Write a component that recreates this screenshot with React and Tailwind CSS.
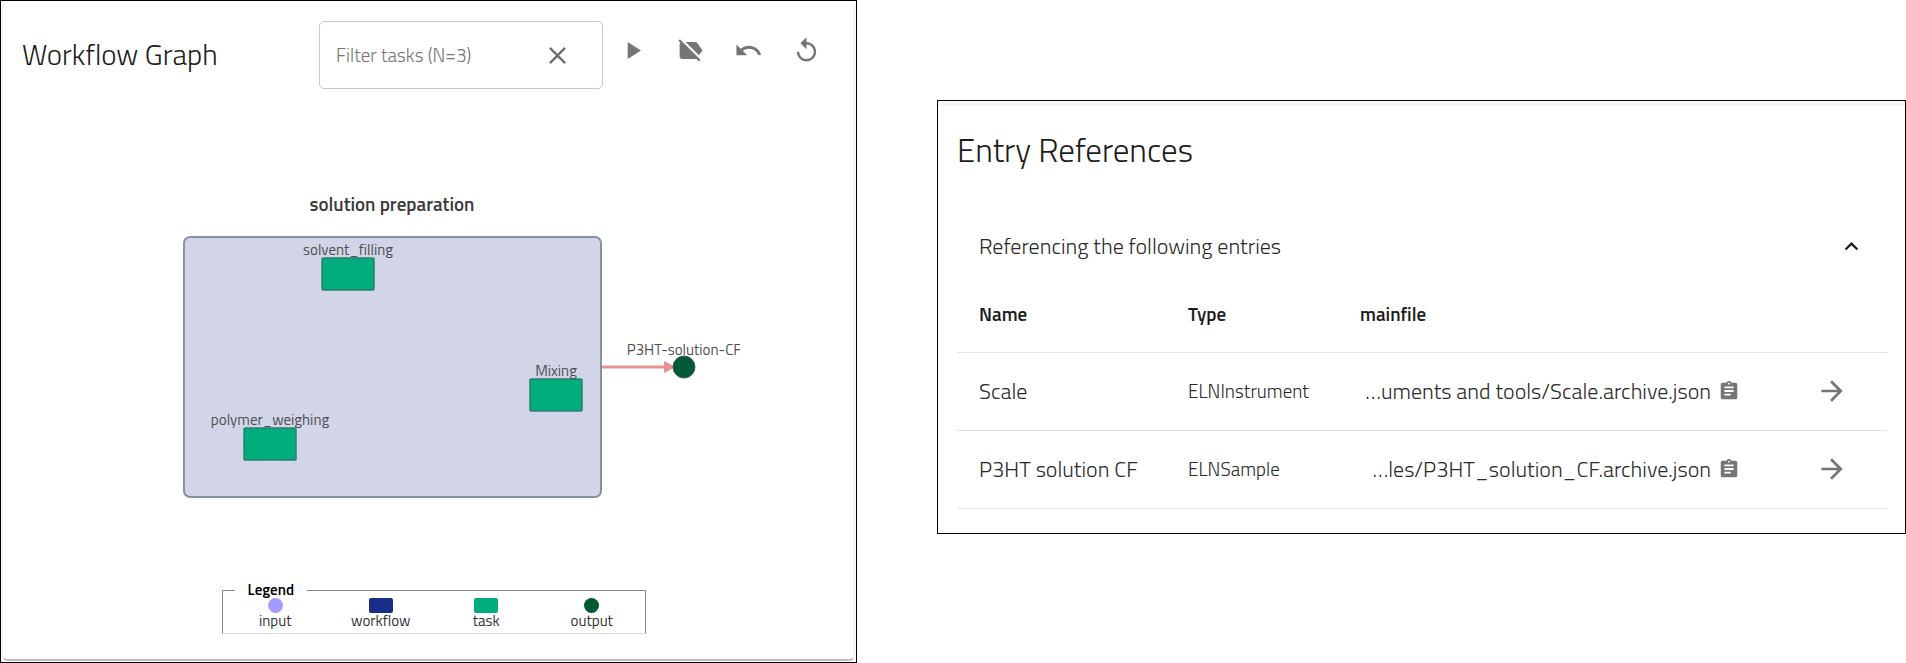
import React from "react";
import {
  MdArrowForward,
  MdAssignment,
  MdClose,
  MdExpandLess,
  MdLabelOff,
  MdPlayArrow,
  MdReplay,
  MdUndo,
} from "react-icons/md";

const actions = [
  { label: "Play", Icon: MdPlayArrow },
  { label: "Hide labels", Icon: MdLabelOff },
  { label: "Undo", Icon: MdUndo },
  { label: "Reset", Icon: MdReplay },
];

const tasks = [
  { name: "solvent_filling", x: 348, y: 275 },
  { name: "Mixing", x: 556, y: 396 },
  { name: "polymer_weighing", x: 270, y: 445 },
];

const legend = [
  { name: "input", shape: "size-[15px] rounded-full bg-[#a49dff]" },
  { name: "workflow", shape: "h-[15px] w-6 rounded-xs bg-[#192e86]" },
  { name: "task", shape: "h-[15px] w-6 rounded-xs bg-[#00ad7c]" },
  { name: "output", shape: "size-[15px] rounded-full bg-[#005a35]" },
];

const entries = [
  { name: "Scale", type: "ELNInstrument", file: "…uments and tools/Scale.archive.json" },
  { name: "P3HT solution CF", type: "ELNSample", file: "…les/P3HT_solution_CF.archive.json" },
];

function Graph() {
  return (
    <svg viewBox="100 180 640 340" className="mx-auto block w-[640px] max-w-full" role="img" aria-label="Workflow graph">
      <text x="392" y="212" textAnchor="middle" className="fill-[#3c3c3c] text-[19px] font-semibold">
        solution preparation
      </text>
      <rect x="184" y="238" width="417" height="260" rx="6" fill="#d2d5e8" stroke="#8791a0" strokeWidth="2" />
      <path d="M602 368H666" stroke="#e69393" strokeWidth="3" />
      <path d="M664 362L676 368L664 374Z" fill="#e69393" />
      <circle cx="684" cy="368" r="11" fill="#005a35" stroke="#3d5f5a" />
      <text x="684" y="356" textAnchor="middle" className="fill-[#505050] text-[15px]">
        P3HT-solution-CF
      </text>
      {tasks.map((t) => (
        <g key={t.name}>
          <rect x={t.x - 26} y={t.y - 16} width="52" height="32" rx="1" fill="#00ad7c" stroke="#2f7d72" strokeWidth="1.5" />
          <text x={t.x} y={t.y - 19} textAnchor="middle" className="fill-[#505050] text-[15px]">
            {t.name}
          </text>
        </g>
      ))}
    </svg>
  );
}

function WorkflowPanel() {
  return (
    <section className="w-full border border-black p-px">
      <div className="h-full rounded-md border-x border-b-2 border-x-[#ececec] border-b-[#bdbdbd] pt-[19px]">
        <header className="flex items-start pr-[19px] pl-[19px]">
          <h1 className="mt-[13px] flex-1 text-[29px] leading-10 font-light whitespace-nowrap text-[#1c1c1c]">
            Workflow Graph
          </h1>
          <div className="flex h-[68px] w-[284px] items-center rounded-[5px] border border-[#c9c9c9] px-4">
            <input
              aria-label="Filter tasks"
              placeholder="Filter tasks (N=3)"
              className="min-w-0 flex-1 bg-transparent text-[19px] font-light outline-none placeholder:text-[#757575]"
            />
            <button aria-label="Clear filter" className="flex size-[58px] items-center justify-center text-[#6f6f6f]">
              <MdClose size={29} />
            </button>
          </div>
          {actions.map(({ label, Icon }) => (
            <button key={label} aria-label={label} className="flex size-[58px] items-center justify-center text-[#757575]">
              <Icon size={29} />
            </button>
          ))}
        </header>
        <div className="mt-[90px] pr-[18px]">
          <Graph />
        </div>
        <div className="pt-[63px] pl-[10px]">
          <fieldset className="mx-auto flex h-[52px] w-[424px] max-w-full border border-[#858585] border-b-[#dcdcdc]">
            <legend className="ml-3 px-[13px] text-[15px] leading-4 font-semibold text-black">Legend</legend>
            <ul className="flex w-full">
              {legend.map((item) => (
                <li key={item.name} className="flex flex-1 flex-col items-center text-[15px] leading-4 text-[#333]">
                  <span className={item.shape} />
                  {item.name}
                </li>
              ))}
            </ul>
          </fieldset>
        </div>
      </div>
    </section>
  );
}

function ReferencesPanel() {
  return (
    <section className="w-full border border-black pb-[24px] text-[#2a2a2a]">
      <div className="h-[5px] bg-[#f5f5f5]" />
      <div className="pr-[18px] pl-[19px]">
        <h2 className="pt-[24px] text-[33px] leading-[40px] font-light text-[#1c1c1c]">Entry References</h2>
        <button aria-expanded="true" className="mt-[60px] flex w-full items-center justify-between pr-[22px] pl-[22px] text-[22px] leading-8 font-light">
          Referencing the following entries
          <MdExpandLess size={27} className="text-[#1c1c1c]" />
        </button>
        <table className="mt-[14px] w-full table-fixed text-left">
          <colgroup>
            <col className="w-[209px]" />
            <col className="w-[172px]" />
            <col />
            <col className="w-[126px]" />
          </colgroup>
          <thead>
            <tr className="h-[76px] border-b border-[#e3e3e3] text-[19px] text-[#1c1c1c]">
              <th className="pl-[22px] font-semibold">Name</th>
              <th className="pl-[22px] font-semibold">Type</th>
              <th className="pl-[22px] font-semibold">mainfile</th>
              <th aria-label="Open" />
            </tr>
          </thead>
          <tbody>
            {entries.map((e) => (
              <tr key={e.name} className="h-[78px] border-b border-[#e3e3e3] text-[22px] font-light whitespace-nowrap">
                <td className="pl-[22px]">{e.name}</td>
                <td className="pl-[22px] text-[19px]">{e.type}</td>
                <td className="pr-[21px]">
                  <div className="flex items-center justify-end gap-[7px]">
                    {e.file}
                    <button aria-label="Copy path" className="text-[#757575]">
                      <MdAssignment size={22} />
                    </button>
                  </div>
                </td>
                <td className="pr-[39px]">
                  <button aria-label={`Open ${e.name}`} className="ml-auto block text-[#757575]">
                    <MdArrowForward size={32} />
                  </button>
                </td>
              </tr>
            ))}
          </tbody>
        </table>
      </div>
    </section>
  );
}

export default function App() {
  return (
    <main className="flex min-h-screen gap-20 bg-white font-['Titillium_Web',Roboto,sans-serif]">
      <div className="flex min-w-0 flex-[857]">
        <WorkflowPanel />
      </div>
      <div className="flex min-w-0 flex-[969] items-start pt-[100px]">
        <ReferencesPanel />
      </div>
    </main>
  );
}
